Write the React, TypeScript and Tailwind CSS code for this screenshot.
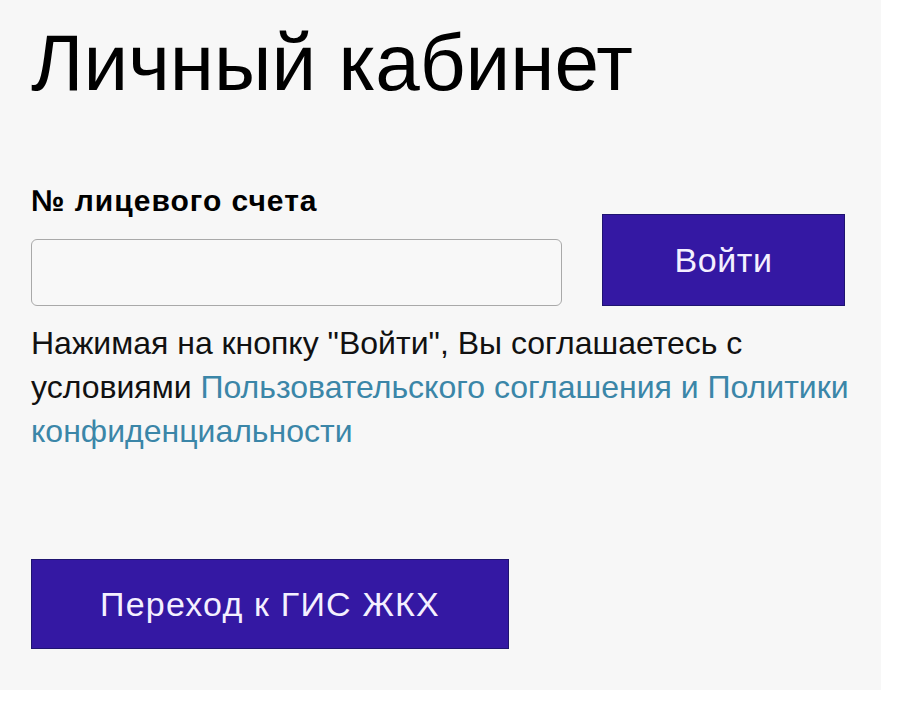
import React from "react";

export default function App() {
  return (
    <div className="w-[898px] h-[704px] bg-white overflow-hidden" style={{ fontFamily: '"Liberation Sans", Arial, sans-serif' }}>
      <div className="w-[881px] h-[690px] bg-[#f7f7f7] pl-[31px] pt-[17px]">
        <h1 className="text-[80px] leading-[92px] text-black">Личный кабинет</h1>
        <div className="flex items-end mt-[77px]">
          <div className="flex flex-col">
            <div className="text-[30px] font-bold leading-[30px] tracking-[1px] text-black">№ лицевого счета</div>
            <input className="mt-[23px] w-[531px] h-[67px] rounded-[6px] border border-[#a9a9a9] bg-[#f8f8f8]" />
          </div>
          <button className="ml-[40px] w-[243px] h-[92px] bg-[#3418a3] border border-[#1f1470] text-[#f4f0ff] text-[34px] tracking-[0.6px]">Войти</button>
        </div>
        <p className="mt-[15px] text-[32px] leading-[44px] text-[#111] w-[830px]">
          <span>Нажимая на кнопку "Войти", Вы соглашаетесь с условиями </span>
          <span className="text-[#3b86a8]">Пользовательского соглашения и Политики конфиденциальности</span>
        </p>
        <button className="mt-[106px] w-[478px] h-[90px] bg-[#3418a3] border border-[#1f1470] text-[#f4f0ff] text-[34px] tracking-[1.2px]">Переход к ГИС ЖКХ</button>
      </div>
    </div>
  );
}
